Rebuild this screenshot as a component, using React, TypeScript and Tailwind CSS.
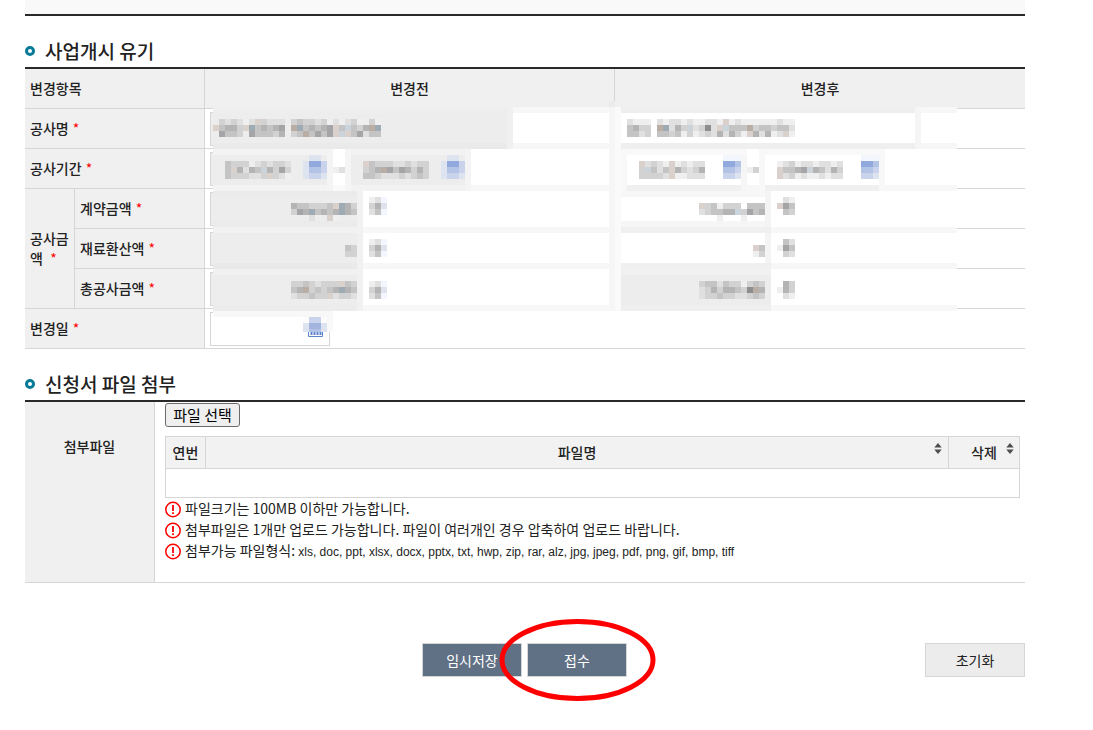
import { useRef } from 'react'
import type { ReactNode } from 'react'

const shades: Record<string, string> = {
  k: '#8f8c8f', a: '#a5a4a6', b: '#b5b4b4', c: '#c5c4c4', d: '#d2d2d3', e: '#e0e0e0', f: '#efeff0',
  n: '#9fabb3', o: '#b8aea6', p: '#dbd1cc', q: '#cad4da', w: '#ffffff',
  '1': '#92a9de', '2': '#b2c3e6', '3': '#c9d4ec', '4': '#dde4f0', '5': '#f3f6fc', '6': '#a3b5df',
}

// [x, y, width, height, fill], in 6px cells
const panels: [number, number, number, number, string][] = [
  [0, 1, 124, 34, '#ffffff'],
  // header edge
  [0, 0, 124, 1, '#f0f0f0'],
  [66, 0, 1, 1, '#ebebeb'],
  [0, 1, 50, 1, '#eeeeee'],
  [50, 1, 74, 1, '#f7f7f7'],
  // row separators
  [0, 7, 124, 1, '#f7f7f7'],
  [0, 14, 124, 1, '#f7f7f7'],
  [0, 21, 124, 1, '#f7f7f7'],
  [0, 27, 124, 1, '#f7f7f7'],
  [0, 34, 124, 1, '#f7f7f7'],
  // column separator
  [66, 1, 1, 34, '#f6f6f6'],
  [67, 1, 1, 34, '#fafafa'],
  // before: name
  [0, 2, 49, 5, '#ededed'],
  [49, 1, 1, 7, '#f0f0f0'],
  [0, 7, 49, 1, '#eaeaea'],
  // before: period
  [0, 8, 19, 7, '#f3f3f3'],
  [19, 8, 1, 7, '#f4f4f4'],
  [0, 9, 19, 5, '#ededed'],
  [20, 14, 2, 1, '#fafafa'],
  [22, 8, 1, 7, '#f5f5f5'],
  [23, 8, 19, 7, '#f2f2f2'],
  [42, 8, 1, 7, '#f4f4f4'],
  [23, 9, 19, 5, '#ededed'],
  // before: amounts
  [24, 15, 1, 20, '#f1f1f1'],
  [0, 15, 24, 6, '#ebebeb'],
  [0, 16, 24, 4, '#ededed'],
  [0, 21, 24, 1, '#f1f1f1'],
  [0, 22, 24, 5, '#ededed'],
  [0, 27, 24, 1, '#e9e9e9'],
  [0, 28, 24, 1, '#f1f1f1'],
  [0, 29, 24, 5, '#ededed'],
  [0, 34, 24, 1, '#ececec'],
  // after: name
  [68, 1, 49, 1, '#eeeeee'],
  [68, 7, 49, 1, '#efefef'],
  [117, 1, 1, 7, '#f5f5f5'],
  // after: period
  [68, 8, 21, 1, '#f9f9f9'],
  [68, 8, 1, 7, '#f8f8f8'],
  [69, 14, 19, 1, '#f0f0f0'],
  [88, 9, 1, 6, '#f6f6f6'],
  [91, 8, 21, 1, '#f9f9f9'],
  [91, 8, 1, 7, '#f8f8f8'],
  [92, 14, 20, 1, '#f0f0f0'],
  [111, 9, 1, 6, '#f8f8f8'],
  // after: amounts
  [68, 15, 25, 1, '#f7f7f7'],
  [92, 15, 1, 19, '#f4f4f4'],
  [68, 20, 24, 1, '#f6f6f6'],
  [68, 21, 25, 1, '#f0f0f0'],
  [68, 27, 25, 1, '#f0f0f0'],
  [68, 28, 25, 1, '#f1f1f1'],
  [68, 29, 25, 5, '#ededed'],
  [68, 34, 25, 1, '#efefef'],
  // change date
  [0, 35, 20, 1, '#f8f8f8'],
  [15, 36, 4, 1, '#fcfcfc'],
  [19, 36, 1, 2.5, '#f9f9f9'],
]

const won = ['fe5', 'db4', 'ec5']
const blueIcon = ['.44.', '4113', '4223', '4334']
const blueIconPlain = ['555', '112', '223', '334']

// [x, y, rows]
const blots: [number, number, string[]][] = [
  [0, 3, ['.dedefepdeee.dcddedfefedffdf', 'pcbbdpncbcba.oncbcbapcqcdbon', '.accd.acccdb.dcocacapqpcaecc']],
  [2, 10, ['cdddfededde', 'cpbebcqbdad', 'cdddeedpdef']],
  [15, 9, blueIcon],
  [20, 11, ['fe']],
  [25, 10, ['pcdddeededd', 'dcboacabdbd', 'ccdeeededcd']],
  [38, 9, blueIcon],
  [13, 17, ['bccdddcpnbd', 'dabncbcbnbc', '...e..pf...']],
  [26, 16, won],
  [22, 24, ['cd', 'dd']],
  [26, 23, won],
  [13, 30, ['ddcdedddpcd', 'cbodcdcbnbc', 'eddcddpedde']],
  [26, 30, won],
  [69, 3, ['efff.efeefeffeefpfeffffffeff', 'cbdd.onebdqedkepqcccodccdcce', 'cced.ccdcfdfedebebdfpbebfepf']],
  [71, 10, ['pedefpfefee', 'dqcecpbdedb', 'ddddepffeee']],
  [85, 9, blueIconPlain],
  [89, 11, ['fd']],
  [94, 10, ['fedfeefeefe', 'pccbaqbcebd', 'pedfeffefee']],
  [108, 9, blueIconPlain],
  [81, 17, ['pdcfdddwccc', 'edccbbqdacb', '...f...f...']],
  [94, 16, ['wef', 'pac', 'wcd']],
  [90, 24, ['pc', 'fd']],
  [94, 23, ['wce', 'fac', 'wde']],
  [81, 30, ['dccecddfdcd', 'edbdbbcdkob', 'eddcddeedcd']],
  [94, 30, ['wbd', 'fbd', 'wef']],
  [15, 36, ['.33.', '4664', '4224']],
]

function Mosaic() {
  return (
    <svg
      className="pointer-events-none absolute top-[34px] left-[188px]"
      width="744"
      height="231"
      viewBox="0 0 124 38.5"
      shapeRendering="crispEdges"
      aria-hidden="true"
    >
      {panels.map(([x, y, w, h, fill], i) => (
        <rect key={i} x={x} y={y} width={w} height={h} fill={fill} />
      ))}
      {blots.map(([x, y, rows], i) =>
        rows.map((row, r) =>
          row.split('').map((c, n) =>
            c === '.' ? null : (
              <rect key={`${i}-${r}-${n}`} x={x + n} y={y + r} width="1" height="1" fill={shades[c]} />
            )
          )
        )
      )}
    </svg>
  )
}

function SectionTitle({ children }: { children: ReactNode }) {
  return (
    <h2 className="flex h-8 items-center gap-2.5 text-[19px] leading-8 font-medium">
      <svg width="10" height="10" viewBox="0 0 10 10" aria-hidden="true">
        <circle cx="5" cy="5" r="3.5" fill="#fff" stroke="#077a98" strokeWidth="3" />
      </svg>
      {children}
    </h2>
  )
}

const Required = () => <span className="ml-px font-normal text-[#ff0000]">*</span>

const headCell = 'border-r border-b border-[#d6d6d6] bg-[#f0f0f0] px-[5px] pb-0.5 text-left font-medium'
const bodyCell = 'border-b border-[#d6d6d6] px-[5px]'
const field = 'block h-[34px] border border-[#d6d6d6] px-2'

function Amounts({ id, label, locked }: { id: string; label: string; locked?: boolean }) {
  return (
    <>
      <th scope="row" className={headCell}>
        {label} <Required />
      </th>
      <td className={bodyCell}>
        <input aria-label={`${label} 변경전`} name={`${id}-before`} readOnly className={`${field} w-[150px] bg-[#ededed]`} />
      </td>
      <td className={bodyCell}>
        <input aria-label={`${label} 변경후`} name={`${id}-after`} readOnly={locked} className={`${field} w-[150px]`} />
      </td>
    </>
  )
}

function Period({ when, muted }: { when: string; muted?: boolean }) {
  const tone = muted ? 'bg-[#ededed]' : 'bg-white'
  return (
    <div className="flex gap-[18px]">
      <input aria-label={`공사 시작일 ${when}`} readOnly={muted} className={`${field} ${tone} w-[120px]`} />
      <input aria-label={`공사 종료일 ${when}`} readOnly={muted} className={`${field} ${tone} w-[120px]`} />
    </div>
  )
}

const SortIcon = () => (
  <svg className="mt-px" width="8" height="12" viewBox="0 0 8 12" fill="#4d4d4d" aria-hidden="true">
    <path d="M4 0 7.7 4.6H.3zM4 11 .3 6.4h7.4z" />
  </svg>
)

const notes = [
  { text: '파일크기는 100MB 이하만 가능합니다.' },
  { text: '첨부파일은 1개만 업로드 가능합니다. 파일이 여러개인 경우 압축하여 업로드 바랍니다.' },
  {
    text: '첨부가능 파일형식: ',
    formats: 'xls, doc, ppt, xlsx, docx, pptx, txt, hwp, zip, rar, alz, jpg, jpeg, pdf, png, gif, bmp, tiff',
  },
]

export default function App() {
  const fileRef = useRef<HTMLInputElement>(null)

  return (
    <main className="min-h-screen bg-white font-['Noto_Sans_CJK_KR',sans-serif] text-[14px] leading-5 text-[#222]">
      <div className="mx-[25px] max-w-[1000px]">
        <div className="h-4 border-b-2 border-[#29282b] bg-[#f9f9f9]" />

        {/* 변경 내역 */}
        <section className="pt-[19px]">
          <SectionTitle>사업개시 유기</SectionTitle>
          <div className="relative">
            <table className="w-full table-fixed border-separate border-spacing-0 border-t-2 border-[#29282b]">
              <colgroup>
                <col className="w-[50px]" />
                <col className="w-[130px]" />
                <col />
                <col />
              </colgroup>
              <thead>
                <tr className="h-10">
                  <th scope="col" colSpan={2} className={headCell}>변경항목</th>
                  <th scope="col" className="border-r border-b border-[#d6d6d6] bg-[#f0f0f0] pb-0.5 font-medium">변경전</th>
                  <th scope="col" className="border-b border-[#d6d6d6] bg-[#f0f0f0] pb-0.5 font-medium">변경후</th>
                </tr>
              </thead>
              <tbody>
                <tr className="h-10">
                  <th scope="row" colSpan={2} className={headCell}>공사명 <Required /></th>
                  <td className={bodyCell}>
                    <input aria-label="공사명 변경전" readOnly className={`${field} w-[300px] bg-[#ededed]`} />
                  </td>
                  <td className={bodyCell}>
                    <input aria-label="공사명 변경후" className={`${field} w-[300px]`} />
                  </td>
                </tr>
                <tr className="h-10">
                  <th scope="row" colSpan={2} className={headCell}>공사기간 <Required /></th>
                  <td className={bodyCell}><Period when="변경전" muted /></td>
                  <td className={bodyCell}><Period when="변경후" /></td>
                </tr>
                <tr className="h-10">
                  <th scope="rowgroup" rowSpan={3} className="border-r border-b border-[#d6d6d6] bg-[#f0f0f0] pb-0.5 pl-[5px] text-left font-medium">
                    공사금<br />액 &nbsp;<Required />
                  </th>
                  <Amounts id="contract" label="계약금액" />
                </tr>
                <tr className="h-10">
                  <Amounts id="material" label="재료환산액" />
                </tr>
                <tr className="h-10">
                  <Amounts id="total" label="총공사금액" locked />
                </tr>
                <tr className="h-10">
                  <th scope="row" colSpan={2} className={headCell}>
                    <label htmlFor="change-date">변경일 <Required /></label>
                  </th>
                  <td colSpan={2} className={bodyCell}>
                    <div className="flex h-[34px] w-[120px] items-center border border-[#d6d6d6] pr-[5px]">
                      <input id="change-date" className="w-0 flex-1 px-1 outline-none" />
                      <button type="button" aria-label="날짜 선택">
                        <svg width="16" height="16" viewBox="0 0 16 16" aria-hidden="true">
                          <path d="M.5 1.5h14v14H.5z" fill="#fff" stroke="#5b84cc" />
                          <path d="M1 2h13v4H1z" fill="#5b84cc" />
                          <path d="M2.5 12.5h11" stroke="#5b84cc" strokeWidth="3" strokeDasharray="2 1" />
                        </svg>
                      </button>
                    </div>
                  </td>
                </tr>
              </tbody>
            </table>
            <Mosaic />
          </div>
        </section>

        {/* 파일 첨부 */}
        <section className="pt-[19px]">
          <SectionTitle>신청서 파일 첨부</SectionTitle>
          <div className="flex border-t-2 border-b border-t-[#29282b] border-b-[#d6d6d6]">
            <div className="w-[130px] shrink-0 border-r border-[#d6d6d6] bg-[#f0f0f0] pt-[34px] text-center font-medium">
              <label htmlFor="attachment">첨부파일</label>
            </div>
            <div className="min-w-0 flex-1 pt-px pr-[5px] pb-[19px] pl-2.5">
              <input id="attachment" ref={fileRef} type="file" className="hidden" />
              <button
                type="button"
                onClick={() => fileRef.current?.click()}
                className="block h-6 w-[75px] rounded-[3px] border border-[#6b6b6b] bg-[#efefef] text-[15px] leading-5 whitespace-nowrap text-black"
              >
                파일 선택
              </button>
              <table className="mt-[9px] w-full table-fixed border-separate border-spacing-0 border-t border-l border-[#d6d6d6]">
                <colgroup>
                  <col className="w-10" />
                  <col />
                  <col className="w-[71px]" />
                </colgroup>
                <thead>
                  <tr className="h-8">
                    <th scope="col" className="border-r border-b border-[#d6d6d6] bg-[#f2f2f2] pb-0.5 font-medium">연번</th>
                    <th scope="col" className="border-r border-b border-[#d6d6d6] bg-[#f2f2f2] px-1.5 pb-0.5 font-medium">
                      <div className="flex items-start">
                        <span className="flex-1 pl-2">파일명</span>
                        <SortIcon />
                      </div>
                    </th>
                    <th scope="col" className="border-r border-b border-[#d6d6d6] bg-[#f2f2f2] px-[5px] pb-0.5 font-medium">
                      <div className="flex items-start">
                        <span className="flex-1 pl-2">삭제</span>
                        <SortIcon />
                      </div>
                    </th>
                  </tr>
                </thead>
                <tbody>
                  <tr className="h-[29px]">
                    <td colSpan={3} className="border-r border-b border-[#d6d6d6]" />
                  </tr>
                </tbody>
              </table>
              <ul>
                {notes.map(({ text, formats }) => (
                  <li key={text} className="flex gap-[3px] leading-[21px]">
                    <svg className="mt-[3px] shrink-0" width="17" height="17" viewBox="0 0 17 17" aria-hidden="true">
                      <circle cx="8" cy="8.5" r="7.2" fill="none" stroke="#f00" strokeWidth="1.5" />
                      <path d="M8 4v6M8 11.2v1.8" stroke="#f00" strokeWidth="1.8" />
                    </svg>
                    <span>
                      {text}
                      {formats && <span className="font-['Liberation_Sans',sans-serif] text-[12px]">{formats}</span>}
                    </span>
                  </li>
                ))}
              </ul>
            </div>
          </div>
        </section>

        {/* 하단 버튼 */}
        <div className="grid grid-cols-[1fr_auto_1fr] pt-[60px] pb-[53px]">
          <div className="col-start-2 flex gap-[5px] pr-px">
            <button type="button" className="h-[34px] w-[100px] border border-[#d6d6d6] bg-[#607186] text-white">
              임시저장
            </button>
            <div className="relative">
              <button type="submit" className="h-[34px] w-[100px] border border-[#d6d6d6] bg-[#607186] text-white">
                접수
              </button>
              <svg
                className="pointer-events-none absolute top-1/2 left-1/2 -translate-x-1/2 -translate-y-1/2"
                width="158"
                height="84"
                viewBox="0 0 158 84"
                aria-hidden="true"
              >
                <ellipse cx="79.5" cy="42" rx="75.5" ry="38.5" fill="none" stroke="#f00" strokeWidth="5" />
              </svg>
            </div>
          </div>
          <button type="reset" className="h-[34px] w-[100px] justify-self-end border border-[#d6d6d6] bg-[#ececec]">
            초기화
          </button>
        </div>
      </div>
    </main>
  )
}
